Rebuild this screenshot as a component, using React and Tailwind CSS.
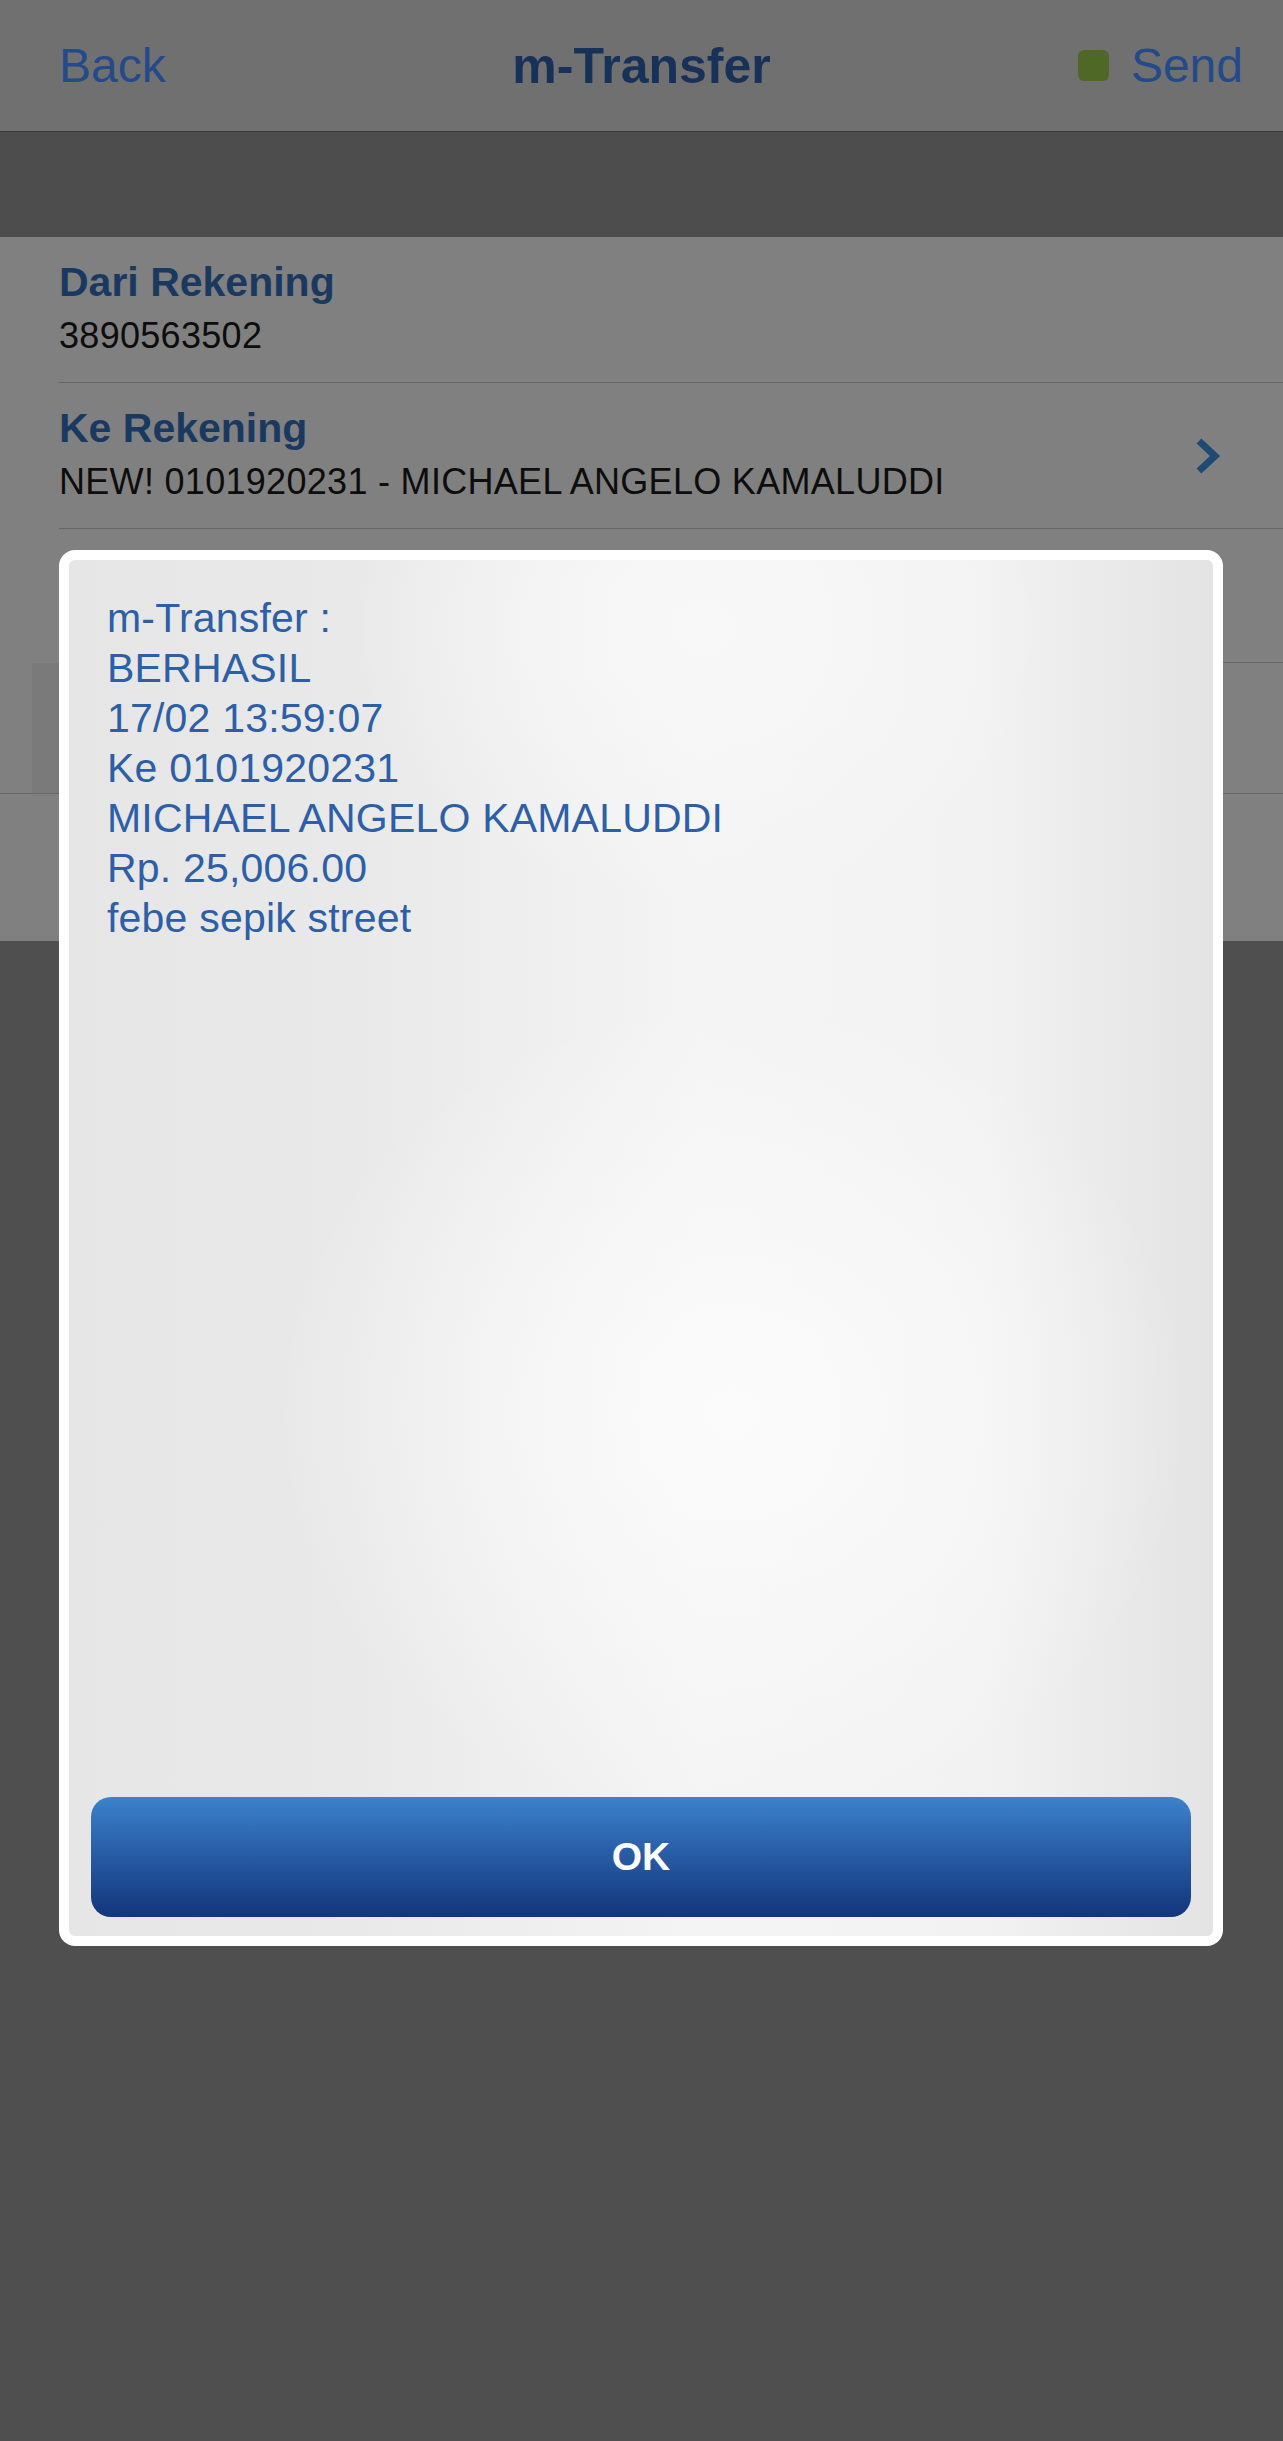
const rows = [
  { label: "Dari Rekening", value: "3890563502" },
  { label: "Ke Rekening", value: "NEW! 0101920231 - MICHAEL ANGELO KAMALUDDI", arrow: true },
];

const message = [
  "m-Transfer :",
  "BERHASIL",
  "17/02 13:59:07",
  "Ke 0101920231",
  "MICHAEL ANGELO KAMALUDDI",
  "Rp. 25,006.00",
  "febe sepik street",
];

const Chevron = () => (
  <svg width="28" height="40" viewBox="0 0 28 40" fill="none">
    <path d="M5 5 L21 20 L5 35" stroke="#1e4a73" strokeWidth="7" strokeLinejoin="miter" />
  </svg>
);

const App = () => {
  return (
    <div className="relative min-h-[2441px] w-full bg-[#4f4f4f] font-['Liberation_Sans',Arial,sans-serif]">
      {/* Nav bar */}
      <div className="grid h-[132px] grid-cols-[1fr_auto_1fr] items-center border-b border-[#3a3a3a] bg-[#707070] px-[40px]">
        <div className="ml-[19px] text-[48px] leading-none text-[#234a8a]">Back</div>
        <div className="text-[50px] font-bold leading-none text-[#173158]">m-Transfer</div>
        <div className="flex items-center justify-end gap-[22px]">
          <span className="h-[31px] w-[31px] rounded-[6px] bg-[#4f6826]" />
          <span className="text-[48px] leading-none text-[#234a8a]">Send</span>
        </div>
      </div>

      <div className="h-[105px] bg-[#4d4d4d]" />

      {/* Form list */}
      <div className="bg-[#808080]">
        {rows.map((row) => (
          <div key={row.label} className="ml-[59px] flex items-center border-b border-[#666666] pr-[61px]">
            <div className="flex-1 pt-[21px] pb-[24px]">
              <div className="h-[48px] text-[41px] font-bold leading-[48px] text-[#1a3961]">{row.label}</div>
              <div className="mt-[8px] h-[44px] text-[36px] leading-[44px] tracking-[0.3px] text-[#0d0d0d]">{row.value}</div>
            </div>
            {row.arrow && <Chevron />}
          </div>
        ))}
        <div className="ml-[59px] h-[134px] border-b border-[#666666]" />
        <div className="flex h-[131px] border-b border-[#666666]">
          <div className="ml-[32px] w-[1150px] bg-[#7a7a7a]" />
        </div>
        <div className="h-[147px]" />
      </div>

      {/* Result dialog */}
      <div className="absolute left-[59px] top-[550px] h-[1396px] w-[1164px] rounded-[16px] bg-white p-[10px]">
        <div className="flex h-full flex-col rounded-[6px] bg-[radial-gradient(ellipse_40%_30%_at_58%_62%,#fbfbfb_0%,rgba(251,251,251,0)_100%),radial-gradient(ellipse_30%_20%_at_55%_5%,#f8f8f8_0%,rgba(248,248,248,0)_100%),linear-gradient(to_right,#e6e6e6_0%,#e9e9e9_25%,#f4f4f4_55%,#f2f2f2_80%,#e3e3e3_100%)]">
          <div className="pl-[38px] pt-[33px] text-[41px] leading-[50px] tracking-[0.2px] text-[#2c5fa8]">
            {message.map((line) => (
              <div key={line}>{line}</div>
            ))}
          </div>
          <div className="flex-1" />
          <button className="mx-[22px] mb-[19px] h-[120px] rounded-[20px] bg-gradient-to-b from-[#3d81cd] to-[#14357a] text-[39px] font-bold text-white">
            OK
          </button>
        </div>
      </div>
    </div>
  );
};

export default App;
